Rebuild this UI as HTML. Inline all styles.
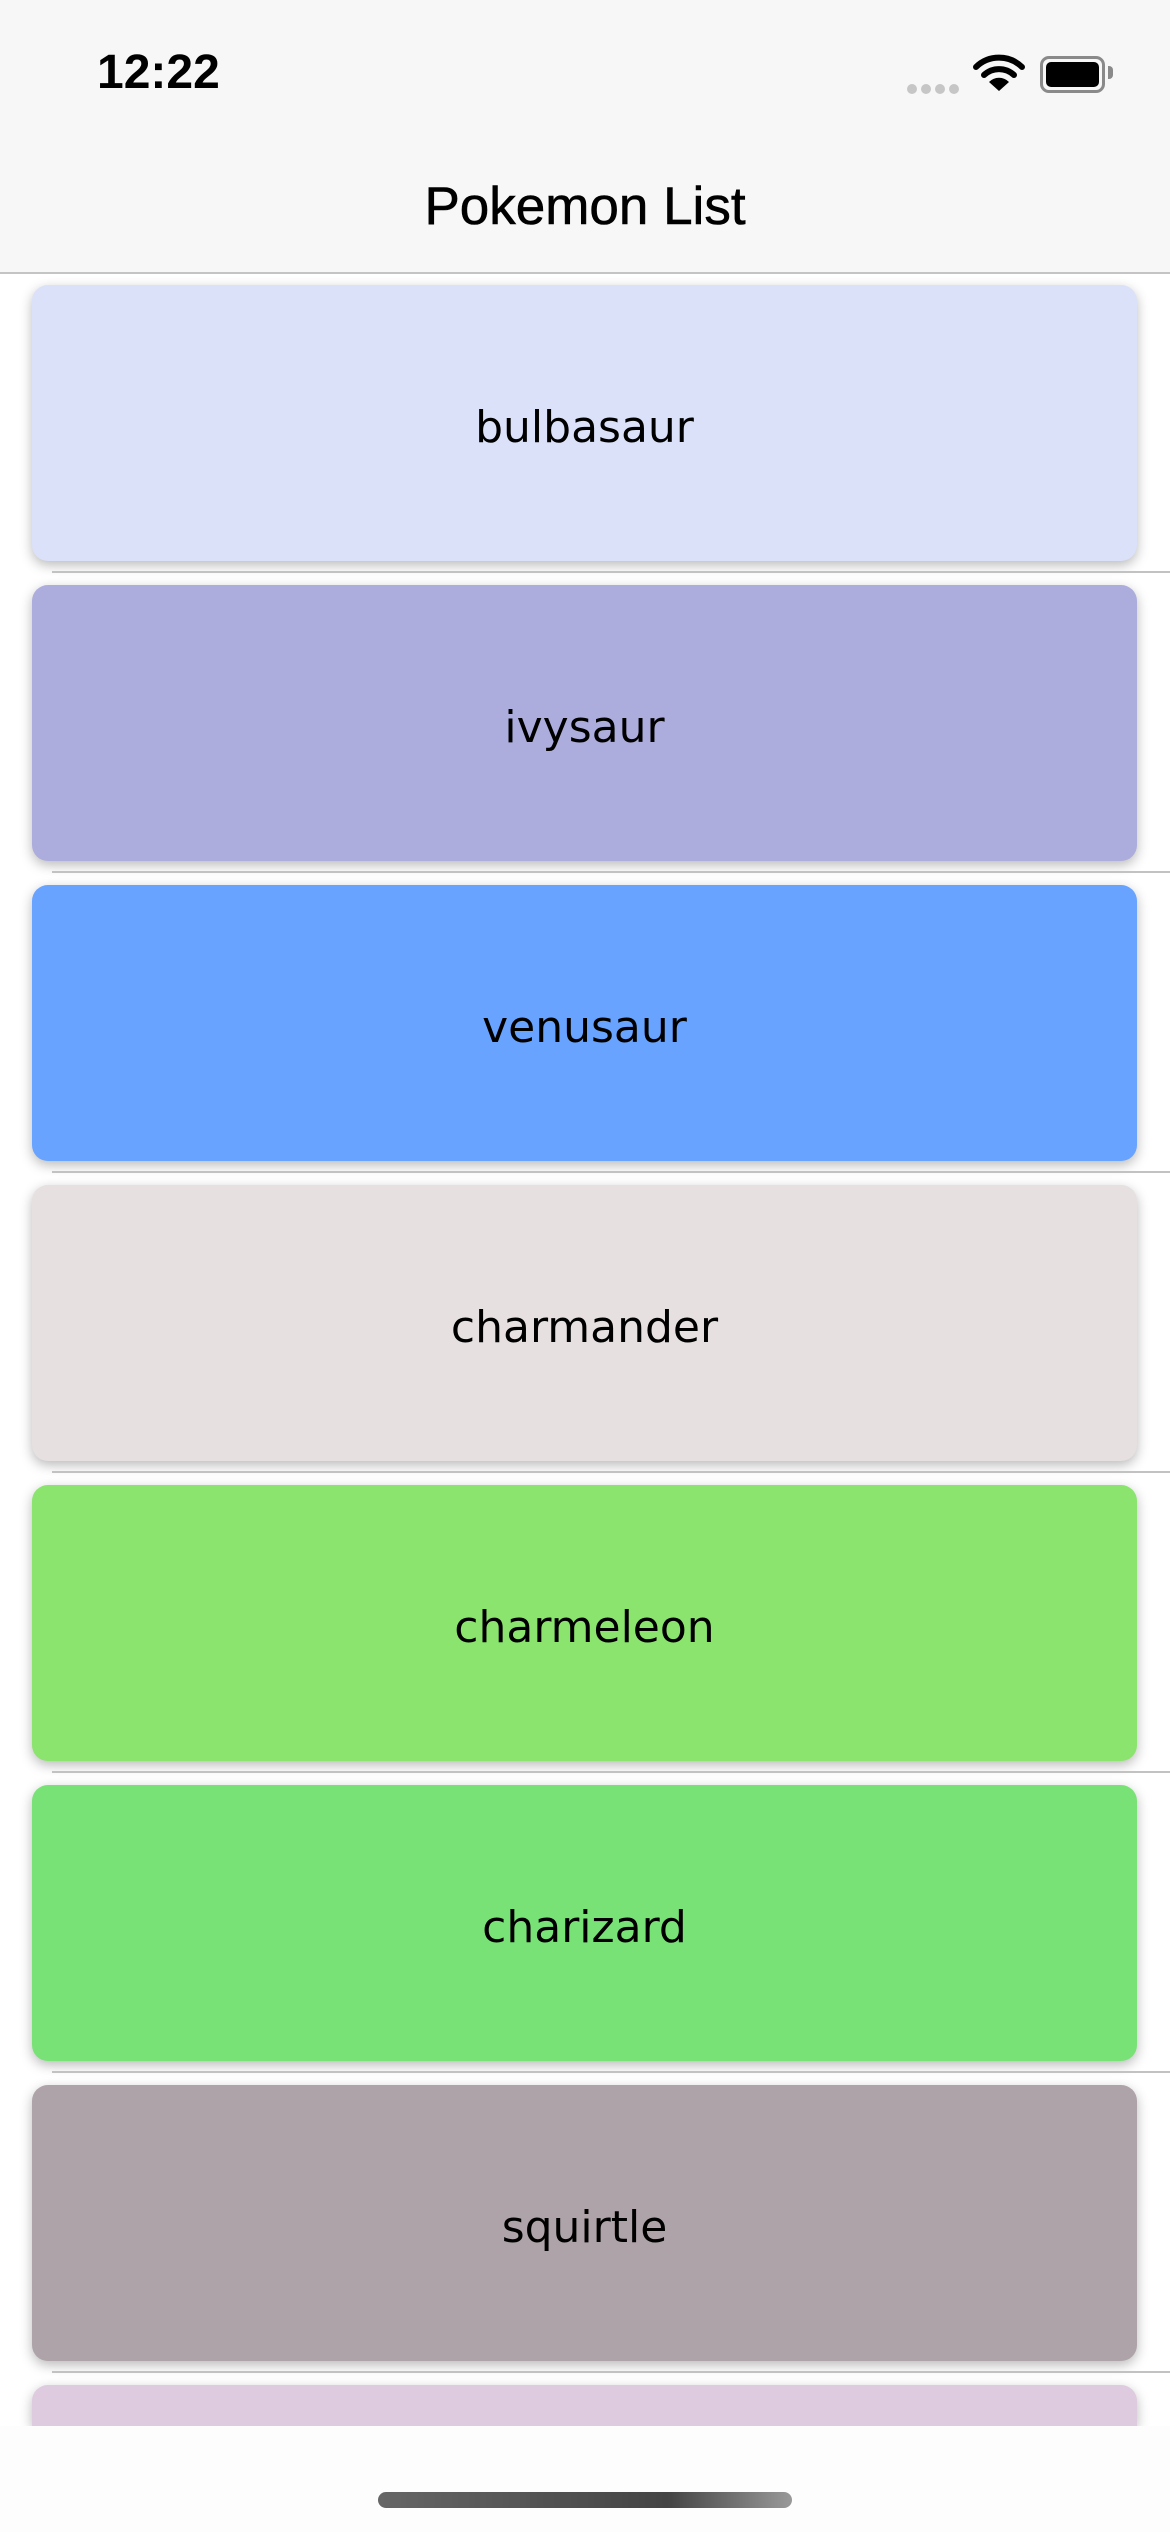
<!DOCTYPE html>
<html><head><meta charset="utf-8"><style>
html,body{margin:0;padding:0;width:1170px;height:2532px;overflow:hidden;}
body{position:relative;background:#fff;font-family:"Liberation Sans",sans-serif;}
.wrap{position:absolute;left:0;top:0;width:1170px;height:2426px;overflow:hidden;}
.nav{position:absolute;left:0;top:0;width:1170px;height:272px;background:#f7f7f7;border-bottom:2px solid #c4c4c4;z-index:3;}
.time{position:absolute;left:97px;top:45px;font-size:48px;font-weight:bold;color:#000;}
.title{position:absolute;left:0;width:1170px;top:176px;text-align:center;font-size:53px;color:#000;-webkit-text-stroke:0.6px #000;}
.card{position:absolute;left:32px;width:1105px;height:276px;box-sizing:border-box;padding-top:8px;border-radius:16px;box-shadow:0 4px 12px rgba(0,0,0,.28);display:flex;align-items:center;justify-content:center;font-family:"Comic Sans MS","DejaVu Sans",sans-serif;font-size:44px;color:#000;}
.sep{position:absolute;left:52px;right:0;height:2px;background:#c2c2c2;}
.foot{position:absolute;left:0;top:2426px;width:1170px;height:106px;background:#fdfdfd;z-index:3;}
.home{position:absolute;left:378px;top:66px;width:414px;height:16px;border-radius:8px;background:linear-gradient(90deg,#666,#444 70%,#999);}
</style></head><body>
<div class="wrap">
<div class="nav">
<div class="time">12:22</div>
<div style="position:absolute;left:907px;top:81px;">
<span style="display:inline-block;width:10px;height:10px;border-radius:50%;background:#c6c6c6;margin-right:4px"></span><span style="display:inline-block;width:10px;height:10px;border-radius:50%;background:#c6c6c6;margin-right:4px"></span><span style="display:inline-block;width:10px;height:10px;border-radius:50%;background:#c6c6c6;margin-right:4px"></span><span style="display:inline-block;width:10px;height:10px;border-radius:50%;background:#c6c6c6"></span>
</div>
<svg style="position:absolute;left:973px;top:54px" width="52" height="38" viewBox="0 0 52 38">
<path d="M3 13 A33 33 0 0 1 49 13" stroke="#000" stroke-width="6" fill="none" stroke-linecap="round"/>
<path d="M11 21 A22 22 0 0 1 41 21" stroke="#000" stroke-width="6" fill="none" stroke-linecap="round"/>
<path d="M26 37 L16 28 A14 14 0 0 1 36 28 Z" fill="#000"/>
</svg>
<div style="position:absolute;left:1040px;top:56px;width:59px;height:31px;border:3px solid #8a8a8a;border-radius:9px;"><div style="position:absolute;left:3px;top:3px;right:3px;bottom:3px;background:#000;border-radius:5px"></div></div>
<div style="position:absolute;left:1108px;top:66px;width:5px;height:13px;background:#8a8a8a;border-radius:0 4px 4px 0"></div>
<div class="title">Pokemon List</div>
</div>
<div class="card" style="top:285px;background:#dae1f9">bulbasaur</div>
<div class="sep" style="top:571px"></div>
<div class="card" style="top:585px;background:#acaddd">ivysaur</div>
<div class="sep" style="top:871px"></div>
<div class="card" style="top:885px;background:#67a3ff">venusaur</div>
<div class="sep" style="top:1171px"></div>
<div class="card" style="top:1185px;background:#e6e0e0">charmander</div>
<div class="sep" style="top:1471px"></div>
<div class="card" style="top:1485px;background:#8ae46d">charmeleon</div>
<div class="sep" style="top:1771px"></div>
<div class="card" style="top:1785px;background:#79e277">charizard</div>
<div class="sep" style="top:2071px"></div>
<div class="card" style="top:2085px;background:#aea3a8">squirtle</div>
<div class="sep" style="top:2371px"></div>
<div class="card" style="top:2385px;height:41px;border-radius:16px 16px 0 0;background:#decbdf"></div>
</div>
<div class="foot"><div class="home"></div></div>
</body></html>
